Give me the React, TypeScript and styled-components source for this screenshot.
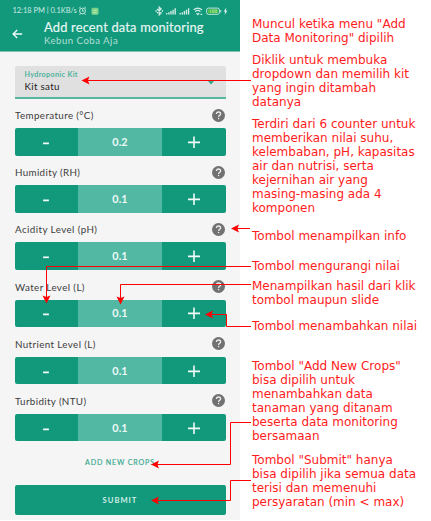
import React from "react";
import styled, { createGlobalStyle } from "styled-components";

const GREEN = "#12997c";

const GlobalStyle = createGlobalStyle`
  * { box-sizing: border-box; }
  html, body { margin: 0; background: #fff; }
  body { overflow: hidden; }
`;

const Page = styled.div`
  position: relative;
  display: flex;
  width: 431px;
  height: 521px;
  overflow: hidden;
  background: #fff;
`;

const Phone = styled.main`
  width: 240px;
  height: 520px;
  background: #f5f5f5;
  font-family: Lato, sans-serif;
  color: #444;
`;

const Header = styled.header`
  height: 51.5px;
  background: ${GREEN};
  border-bottom: 1px solid #7fc5b4;
  color: #e9f7f3;
`;

const StatusBar = styled.div`
  display: flex;
  align-items: center;
  height: 20px;
  padding: 1px 12px 0 12.5px;
  font-size: 7.5px;
  white-space: pre;
  color: #cdeae3;
`;

const StatusText = styled.span`
  letter-spacing: -0.04px;
`;

const StatusIcons = styled.svg<{ $push?: boolean }>`
  display: block;
  flex: none;
  margin-left: ${(p) => (p.$push ? "auto" : "1px")};
`;

const TitleBar = styled.div`
  display: flex;
  padding-left: 12px;
`;

const BackIcon = styled.svg`
  flex: none;
  width: 11px;
  height: 10px;
  margin: 9px 21px 0 0;
`;

const Title = styled.h1`
  margin: 0;
  font-size: 12.9px;
  font-weight: 400;
  line-height: 15px;
  letter-spacing: 0.18px;
  white-space: nowrap;
  -webkit-text-stroke: 0.15px currentColor;
`;

const Subtitle = styled.div`
  font-size: 9.6px;
  line-height: 12px;
  letter-spacing: 0.5px;
  color: #b5dfd5;
`;

const Form = styled.div`
  padding: 14.5px 14.5px 0;
`;

const SelectField = styled.div`
  display: flex;
  justify-content: space-between;
  height: 33px;
  padding: 4px 11px 0 10px;
  border-radius: 2px 2px 0 0;
  border-bottom: 2px solid #55b6a2;
  background: #e0e0e0;
  margin-bottom: 3.3px;
`;

const SelectCaption = styled.div`
  font-size: 7.1px;
  font-weight: 700;
  line-height: 10px;
  letter-spacing: 0.38px;
  color: #4cb39c;
`;

const SelectValue = styled.div`
  font-size: 9.8px;
  line-height: 13px;
  letter-spacing: 0.3px;
  color: #222;
`;

const Caret = styled.svg`
  width: 8px;
  height: 5px;
  margin-top: 9.5px;
`;

const Field = styled.section`
  height: 57.1px;
`;

const FieldHeader = styled.div`
  display: flex;
  align-items: center;
  justify-content: space-between;
  height: 26px;
  padding: 0 1px 0 0.5px;
`;

const FieldLabel = styled.span<{ $spacing: number }>`
  font-size: 9.8px;
  letter-spacing: ${(p) => p.$spacing}px;
  color: #3c3c3c;
`;

const InfoButton = styled.button`
  display: grid;
  place-items: center;
  width: 13px;
  height: 13px;
  padding: 0;
  border: 0;
  border-radius: 50%;
  background: #717171;
`;

const Counter = styled.div`
  display: grid;
  grid-template-columns: 63.5px 84px 63.5px;
  height: 27.7px;
  overflow: hidden;
  border-radius: 2px;
  background: ${GREEN};
`;

const StepButton = styled.button`
  display: grid;
  place-items: center;
  padding: 0;
  border: 0;
  background: transparent;
`;

const CounterValue = styled.output`
  display: grid;
  place-items: center;
  padding-bottom: 1px;
  background: #52b8a3;
  color: #ecf9f6;
  font-size: 10.8px;
  font-weight: 700;
  letter-spacing: 0.1px;
`;

const TextButton = styled.button`
  display: block;
  width: 100%;
  height: 36px;
  padding: 0;
  border: 0;
  background: transparent;
  font: 400 7.1px Lato, sans-serif;
  letter-spacing: 0.84px;
  color: #35a88e;
  -webkit-text-stroke: 0.15px currentColor;
`;

const SubmitButton = styled.button`
  display: block;
  width: 100%;
  height: 29.7px;
  margin-top: 4.5px;
  padding: 0;
  border: 0;
  border-radius: 2px;
  background: ${GREEN};
  font: 700 7.6px Lato, sans-serif;
  letter-spacing: 1px;
  color: #d5eee8;
`;

const Notes = styled.aside`
  padding: 17px 0 0 12px;
  font: 12px/14px "DejaVu Sans", sans-serif;
  color: #ff1c1c;
  white-space: nowrap;
`;

const Note = styled.p<{ $gap: number }>`
  margin: 0 0 ${(p) => p.$gap}px;
`;

const NoteLine = styled.span`
  display: block;
`;

const Connectors = styled.svg`
  position: absolute;
  inset: 0;
  pointer-events: none;
`;

const fields = [
  { label: "Temperature (°C)", value: "0.2", spacing: 0.38 },
  { label: "Humidity (RH)", value: "0.1", spacing: 0.34 },
  { label: "Acidity Level (pH)", value: "0.1", spacing: 0.42 },
  { label: "Water Level (L)", value: "0.1", spacing: 0.4 },
  { label: "Nutrient Level (L)", value: "0.1", spacing: 0.38 },
  { label: "Turbidity (NTU)", value: "0.1", spacing: 0.36 },
];

const notes: { gap: number; lines: string[] }[] = [
  { gap: 8, lines: ['Muncul ketika menu "Add', 'Data Monitoring" dipilih'] },
  { gap: 8, lines: ["Diklik untuk membuka", "dropdown dan memilih kit", "yang ingin ditambah", "datanya"] },
  {
    gap: 14,
    lines: [
      "Terdiri dari 6 counter untuk",
      "memberikan nilai suhu,",
      "kelembaban, pH, kapasitas",
      "air dan nutrisi, serta",
      "kejernihan air yang",
      "masing-masing ada 4",
      "komponen",
    ],
  },
  { gap: 16, lines: ["Tombol menampilkan info"] },
  { gap: 6, lines: ["Tombol mengurangi nilai"] },
  { gap: 12, lines: ["Menampilkan hasil dari klik", "tombol maupun slide"] },
  { gap: 26, lines: ["Tombol menambahkan nilai"] },
  {
    gap: 10,
    lines: [
      'Tombol "Add New Crops"',
      "bisa dipilih untuk",
      "menambahkan data",
      "tanaman yang ditanam",
      "beserta data monitoring",
      "bersamaan",
    ],
  },
  {
    gap: 0,
    lines: ['Tombol "Submit" hanya', "bisa dipilih jika semua data", "terisi dan memenuhi", "persyaratan (min < max)"],
  },
];

const connectors = [
  { line: "M251 80.5H87", head: "M81.5 80.5l8-4-1.6 4 1.6 4z" },
  { line: "M250 228.5H236", head: "M231 228.5l8-4-1.6 4 1.6 4z" },
  { line: "M251 266.5H46.5V298", head: "M46.5 303.5l-4-8 4 1.6 4-1.6z" },
  { line: "M251 284.5H120.5V299", head: "M120.5 304.5l-4-8 4 1.6 4-1.6z" },
  { line: "M251 326.5H226.5V314.5H210", head: "M205 314.5l8-4-1.6 4 1.6 4z" },
  { line: "M251 422.5H230.5V464.5H156", head: "M151 464.5l8-4-1.6 4 1.6 4z" },
  { line: "M251 480.5H230.5V500.5H156", head: "M151 500.5l8-4-1.6 4 1.6 4z" },
];

function CounterField({ label, value, spacing }: { label: string; value: string; spacing: number }) {
  return (
    <Field>
      <FieldHeader>
        <FieldLabel $spacing={spacing}>{label}</FieldLabel>
        <InfoButton aria-label={`Info ${label}`}>
          <svg width="7" height="9" viewBox="0 0 7 9" fill="none" stroke="#eee" strokeWidth="1.3">
            <path d="M1.4 3.1C1.4 1.7 2.3 1 3.5 1s2.1.7 2.1 1.9C5.6 4.3 3.6 4.4 3.6 6" />
            <path d="M3.6 6.9v1.3" />
          </svg>
        </InfoButton>
      </FieldHeader>
      <Counter>
        <StepButton aria-label="Kurangi">
          <svg width="12" height="12" viewBox="0 0 12 12" stroke="#f2fbf9" strokeWidth="1.7">
            <path d="M3.1 7.3H8.9" />
          </svg>
        </StepButton>
        <CounterValue>{value}</CounterValue>
        <StepButton aria-label="Tambah">
          <svg width="12" height="12" viewBox="0 0 12 12" stroke="#f2fbf9" strokeWidth="1.6">
            <path d="M0 6.4H12M6 .4V12" />
          </svg>
        </StepButton>
      </Counter>
    </Field>
  );
}

export default function App() {
  return (
    <Page>
      <GlobalStyle />
      <Phone>
        <Header>
          <StatusBar>
            <StatusText>12:18 PM | 0.1KB/s</StatusText>
            <StatusIcons width="22" height="10" viewBox="0 0 22 10">
              <g fill="none" stroke="#d5efe8" strokeWidth=".9">
                <circle cx="4.5" cy="5" r="2.9" />
                <path d="M4.5 3.3V5.2H6M.9 2.4L2.7 .9M8.1 2.4L6.3 .9M2.4 7.6L1.6 8.8M6.6 7.6l.8 1.2" />
              </g>
              <rect x="13.5" y="1.8" width="7" height="7" rx="1.5" fill="#7fd38b" />
              <path d="M15 6.8h3.6M15.7 4.5h3" stroke="#c5eeb0" strokeWidth=".9" />
            </StatusIcons>
            <StatusIcons $push width="73" height="10" viewBox="0 0 73 10">
              <g fill="none" stroke="#d5efe8" strokeWidth=".9">
                <path d="M2 3l4.2 4L4.2 9V1l2 2L2 7" strokeWidth="1.1" />
                <path d="M.4 5h1.3M6.8 5h1.3" strokeWidth="1.3" />
                <path d="M11.8 8.5V7M13.9 8.5V6.2M16 8.5V5M18.1 8.5V3.8M20.2 8.5V2.2" strokeWidth="1.35" />
                <path d="M25.2 8.5V7M27.3 8.5V6.2M29.4 8.5V5M31.5 8.5V3.8M33.6 8.5V2.2" strokeWidth="1.35" />
                <path d="M38.7 3.8c2.5-2.1 5.7-2.1 8.2 0M40.2 5.6c1.6-1.4 3.6-1.4 5.2 0" strokeWidth="1.2" />
                <path d="M41.5 7.2l1.4 1.5 1.3-1.5M45.5 8.3h1.7" strokeWidth="1.2" />
                <rect x="51.6" y="2.1" width="12.8" height="6.2" rx="1.8" />
                <path d="M65.7 4v2.4" />
              </g>
              <rect x="52.8" y="3.2" width="10.4" height="4" rx=".7" fill="#4fc14a" />
              <path d="M55.4 3.8v2.8M57.4 3.8h1.5v2.8h-1.5zM60.2 3.8h1.5v2.8h-1.5z" fill="none" stroke="#c9efb7" strokeWidth=".5" />
              <path d="M71.4 1.5L68.7 5.6h1.5L69.5 9l2.9-4.2h-1.6z" fill="#e3f6f1" />
            </StatusIcons>
          </StatusBar>
          <TitleBar>
            <BackIcon viewBox="0 0 11 10" fill="none" stroke="#eefaf7" strokeWidth="1.35">
              <path d="M10.2 5H1.4M5.2 .9L1.1 5l4.1 4.1" />
            </BackIcon>
            <div>
              <Title>Add recent data monitoring</Title>
              <Subtitle>Kebun Coba Aja</Subtitle>
            </div>
          </TitleBar>
        </Header>
        <Form>
          <SelectField>
            <div>
              <SelectCaption>Hydroponic Kit</SelectCaption>
              <SelectValue>Kit satu</SelectValue>
            </div>
            <Caret viewBox="0 0 8 5">
              <path d="M1 1h6L4 4.6z" fill="#35a58c" />
            </Caret>
          </SelectField>
          {fields.map((f) => (
            <CounterField key={f.label} {...f} />
          ))}
          <TextButton>ADD NEW CROPS</TextButton>
          <SubmitButton>SUBMIT</SubmitButton>
        </Form>
      </Phone>
      <Notes>
        {notes.map((note) => (
          <Note key={note.lines[0]} $gap={note.gap}>
            {note.lines.map((text) => (
              <NoteLine key={text}>{text}</NoteLine>
            ))}
          </Note>
        ))}
      </Notes>
      <Connectors width="431" height="521" viewBox="0 0 431 521">
        {connectors.map((c) => (
          <g key={c.line}>
            <path d={c.line} fill="none" stroke="#f00" />
            <path d={c.head} fill="#f00" />
          </g>
        ))}
      </Connectors>
    </Page>
  );
}
